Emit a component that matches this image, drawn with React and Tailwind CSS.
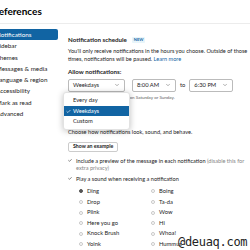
import { Check, ChevronDown } from "lucide-react";

const navItems = [
  "Notifications",
  "Sidebar",
  "Themes",
  "Messages & media",
  "Language & region",
  "Accessibility",
  "Mark as read",
  "Advanced",
];

const soundsLeft = ["Ding", "Drop", "Plink", "Here you go", "Knock Brush", "Yoink"];
const soundsRight = ["Boing", "Ta-da", "Wow", "Hi", "Whoa!", "Hummus"];

function Select({ label, width }) {
  return (
    <div
      className={`${width} h-[13px] flex items-center justify-between border border-[#bbbbbb] rounded-[2px] px-[4px] bg-white`}
    >
      <span className="text-[5.8px] text-[#1d1c1d]">{label}</span>
      <ChevronDown className="w-[6px] h-[6px] text-[#616061]" strokeWidth={2} />
    </div>
  );
}

function Radio({ label, on }) {
  return (
    <div className="flex items-center gap-[4px] h-[10.6px]">
      <span
        className={`w-[4px] h-[4px] rounded-full border ${
          on ? "border-[#555] bg-[#555]" : "border-[#c8c8c8] bg-white"
        }`}
      />
      <span className="text-[5.8px] text-[#1d1c1d]">{label}</span>
    </div>
  );
}

export default function App() {
  return (
    <div
      className="relative w-[250px] h-[250px] overflow-hidden bg-white text-[#1d1c1d]"
      style={{ fontFamily: "Lato, 'Liberation Sans', sans-serif" }}
    >
      {/* header */}
      <div className="h-[24px] border-b border-[#ececec] flex items-center">
        <h1 className="ml-[-11px] text-[10px] font-bold text-black">Preferences</h1>
      </div>

      <div className="flex">
        {/* sidebar */}
        <div className="w-[58px] pt-[5px] flex-shrink-0">
          {navItems.map((item, i) => (
            <div
              key={item}
              className={`h-[11.3px] flex items-center text-[6.3px] ${
                i === 0 ? "bg-[#1164a3] text-white rounded-r-[2px]" : "text-[#1d1c1d]"
              }`}
            >
              <span className="ml-[-4px] whitespace-nowrap">{item}</span>
            </div>
          ))}
        </div>

        {/* content */}
        <div className="ml-[10px] pt-[11px] flex-1">
          <div className="flex items-center gap-[5px]">
            <span className="text-[6.2px] font-bold">Notification schedule</span>
            <span className="text-[4px] font-bold text-[#1264a3] bg-[#e8f5fa] px-[2px] rounded-[1px]">NEW</span>
          </div>
          <p className="mt-[3px] text-[5.6px] leading-[8px] whitespace-nowrap">
            You'll only receive notifications in the hours you choose. Outside of those
            <br />
            times, notifications will be paused.{" "}
            <span className="text-[#1264a3]">Learn more</span>
          </p>

          <p className="mt-[4px] text-[6.2px] font-bold">Allow notifications:</p>
          <div className="mt-[2px] flex items-center">
            <Select label="Weekdays" width="w-[57px]" />
            <div className="ml-[7px]">
              <Select label="8:00 AM" width="w-[44px]" />
            </div>
            <span className="mx-[4px] text-[5.8px]">to</span>
            <Select label="6:30 PM" width="w-[44px]" />
          </div>
          <p className="mt-[3px] text-[4.5px] text-[#616061] whitespace-nowrap">
            You won't receive notifications on Saturday or Sunday.
          </p>

          <p className="mt-[27px] text-[5.6px] whitespace-nowrap">
            Choose how notifications look, sound, and behave.
          </p>

          <button className="mt-[5px] h-[10px] px-[4px] border border-[#cccccc] rounded-[2px] text-[5.2px] font-bold bg-white flex items-center">
            Show an example
          </button>

          <div className="mt-[5px] flex items-start gap-[4px]">
            <span className="mt-[1.5px] w-[4px] h-[4px] flex items-center justify-center flex-shrink-0">
              <Check className="w-[5px] h-[5px] text-[#444]" strokeWidth={4} />
            </span>
            <div className="text-[5.6px] leading-[7px] whitespace-nowrap">
              Include a preview of the message in each notification{" "}
              <span className="text-[#868686]">(disable this for</span>
              <br />
              <span className="text-[#868686]">extra privacy)</span>
            </div>
          </div>

          <div className="mt-[4px] flex items-center gap-[4px]">
            <span className="w-[4px] h-[4px] flex items-center justify-center flex-shrink-0">
              <Check className="w-[5px] h-[5px] text-[#444]" strokeWidth={4} />
            </span>
            <span className="text-[5.6px] whitespace-nowrap">Play a sound when receiving a notification</span>
          </div>

          <div className="mt-[3px] ml-[11px] flex">
            <div className="w-[72px]">
              {soundsLeft.map((s, i) => (
                <Radio key={s} label={s} on={i === 0} />
              ))}
            </div>
            <div>
              {soundsRight.map((s) => (
                <Radio key={s} label={s} />
              ))}
            </div>
          </div>
        </div>
      </div>

      {/* open dropdown menu */}
      <div className="absolute left-[63px] top-[92px] w-[67px] py-[2px] bg-white rounded-[3px] shadow-[0_1px_6px_rgba(0,0,0,0.25)] border border-[#e2e2e2]">
        <div className="h-[11px] flex items-center pl-[9px] text-[5.8px]">Every day</div>
        <div className="h-[10px] flex items-center bg-[#1164a3] text-white text-[5.8px]">
          <Check className="ml-[2px] w-[5px] h-[5px]" strokeWidth={3} />
          <span className="ml-[2px]">Weekdays</span>
        </div>
        <div className="h-[11px] flex items-center pl-[9px] text-[5.8px]">Custom</div>
      </div>

      {/* watermark */}
      <div
        className="absolute left-[178px] top-[233px] text-[12px] text-[#222] tracking-tight"
        style={{ fontFamily: "'DejaVu Sans Mono', monospace" }}
      >
        @deuaq.com
      </div>
    </div>
  );
}
